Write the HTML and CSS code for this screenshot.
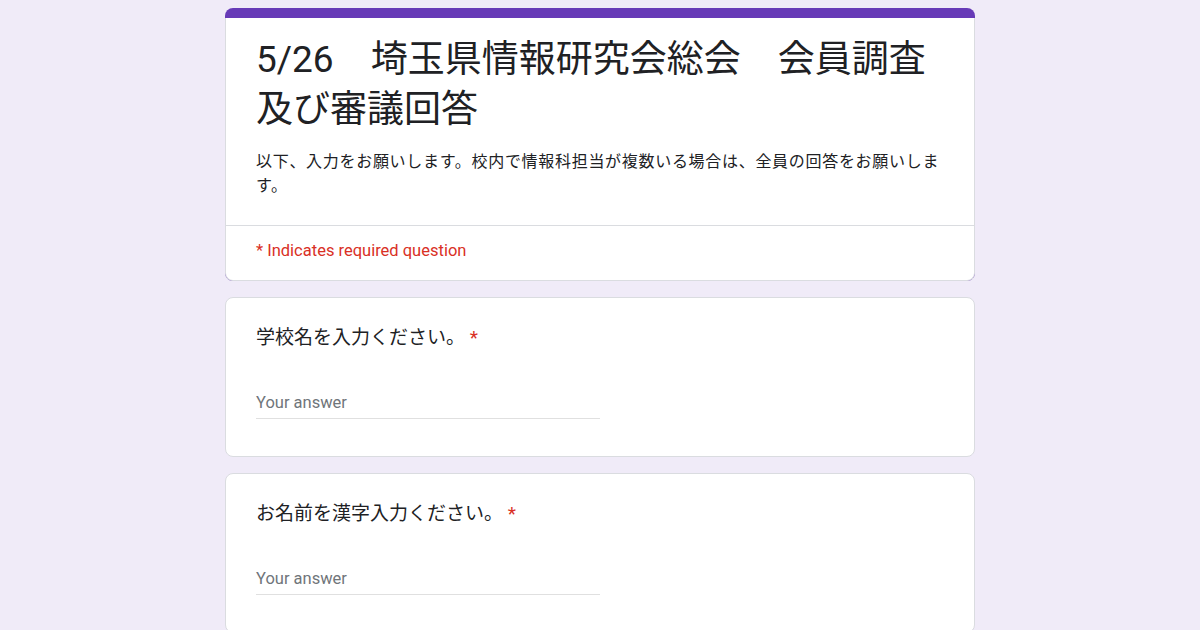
FILE: index.html
```html
<!DOCTYPE html>
<html lang="ja">
<head>
<meta charset="utf-8">
<title>5/26　埼玉県情報研究会総会　会員調査及び審議回答</title>
<link rel="stylesheet" href="styles.css">
</head>
<body>
<main class="form">
  <section class="header-card">
    <div class="header-body">
      <div class="header-top">
        <h1 class="title">5/26　埼玉県情報研究会総会　会員調査及び審議回答</h1>
        <p class="desc">以下、入力をお願いします。校内で情報科担当が複数いる場合は、全員の回答をお願いします。</p>
      </div>
      <div class="required-note">* Indicates required question</div>
    </div>
  </section>

  <section class="card">
    <div class="question">学校名を入力ください。<span class="req"> *</span></div>
    <div class="answer">Your answer</div>
  </section>

  <section class="card">
    <div class="question">お名前を漢字入力ください。<span class="req"> *</span></div>
    <div class="answer">Your answer</div>
  </section>
</main>
</body>
</html>
```

FILE: styles.css
```css
html, body {
  margin: 0;
  padding: 0;
}

body {
  background: #f0ebf8;
  color: #202124;
  font-family: Roboto, "Noto Sans CJK JP", sans-serif;
}

.form {
  width: 750px;
  margin: 8px auto 0;
  display: flex;
  flex-direction: column;
  gap: 16px;
}

.header-card {
  background: #673ab7;
  border-radius: 8px;
  padding-top: 10px;
}

.header-body {
  background: #fff;
  border: 1px solid #dadce0;
  border-top: 0;
  border-radius: 0 0 8px 8px;
}

.header-top {
  padding: 17px 30px 27px;
  border-bottom: 1px solid #dadce0;
}

.title {
  margin: 0;
  font-size: 37px;
  line-height: 50px;
  font-weight: 400;
}

.desc {
  margin: 15px 0 0;
  font-size: 16px;
  line-height: 24px;
  letter-spacing: 0.7px;
}

.required-note {
  padding: 13px 30px 17px;
  font-size: 16.5px;
  line-height: 24px;
  color: #d93025;
}

.card {
  background: #fff;
  border: 1px solid #dadce0;
  border-radius: 8px;
  padding: 28px 30px 37px;
}

.question {
  font-size: 19px;
  line-height: 24px;
}

.req {
  color: #d93025;
}

.answer {
  margin-top: 41px;
  width: 50%;
  font-size: 16.5px;
  line-height: 24px;
  color: #70757a;
  padding-bottom: 3px;
  border-bottom: 1px solid #e0e0e0;
}
```
